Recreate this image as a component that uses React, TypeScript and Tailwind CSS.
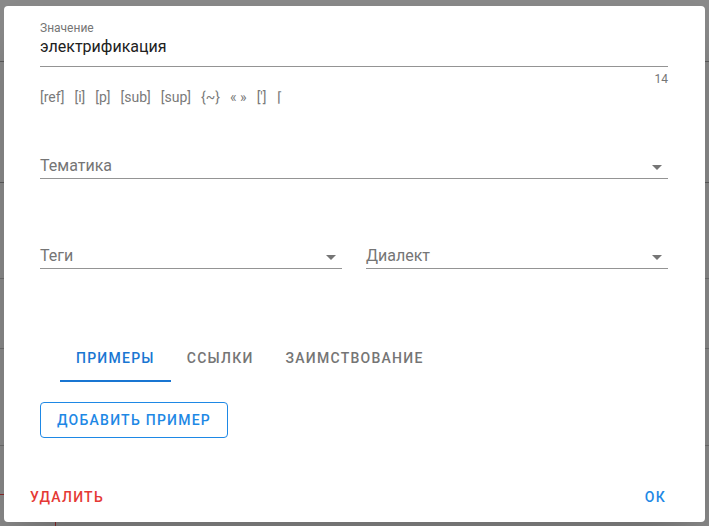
import React from 'react';

const font = { fontFamily: 'Roboto, "Noto Sans", sans-serif' };

function Arrow() {
  return (
    <svg className="w-6 h-6 shrink-0 text-[#757575] -mr-[1px]" viewBox="0 0 24 24" fill="currentColor">
      <path d="M7 10l5 5 5-5z" />
    </svg>
  );
}

function SelectField({ label }: { label: string }) {
  return (
    <div className="flex items-center justify-between border-b border-[#949494] h-[23px] flex-1">
      <span className="text-[16px] leading-[19px] text-[#757575] -mt-[4px]">{label}</span>
      <Arrow />
    </div>
  );
}

const formats = ['[ref]', '[i]', '[p]', '[sub]', '[sup]', '{~}', '« »', "[']", '⌈'];

export default function App() {
  return (
    <div className="w-[709px] h-[526px] bg-[#8a8a8a] relative overflow-hidden" style={font}>
      {/* page behind the overlay */}
      <div className="absolute inset-0 pointer-events-none">
        <div className="absolute left-0 right-0 top-[61px] h-px bg-[#5c5c5c]" />
        <div className="absolute left-0 right-0 top-[182px] h-px bg-[#5c5c5c]" />
        <div className="absolute left-0 right-0 top-[278px] h-px bg-[#6e6e6e]" />
        <div className="absolute left-0 right-0 top-[348px] h-px bg-[#6e6e6e]" />
        <div className="absolute left-0 right-0 top-[445px] h-px bg-[#6e6e6e]" />
        <div className="absolute left-0 w-[6px] top-[494px] h-px bg-[#8b2a2a]" />
        <div className="absolute left-[55px] w-px top-[515px] bottom-0 bg-[#8b2a2a]" />
      </div>

      <div className="relative ml-[4px] mt-[6px] w-[701px] h-[516px] bg-white rounded-[4px] shadow-2xl flex flex-col">
        <div className="pl-[36px] pr-[37px] pt-[15px] flex flex-col">
          <div className="text-[12px] leading-[14px] text-[#757575]">Значение</div>
          <div className="mt-[2px] pb-[10px] border-b border-[#949494] text-[16px] leading-[19px] text-[#212121]">
            электрификация
          </div>
          <div className="mt-[5px] text-right text-[12px] leading-[14px] text-[#757575]">14</div>
          <div className="mt-[3px] flex gap-[10px] text-[14px] leading-[17px] text-[#7a7a7a]">
            {formats.map((f) => (
              <span key={f}>{f}</span>
            ))}
          </div>

          <div className="mt-[50px] flex">
            <SelectField label="Тематика" />
          </div>

          <div className="mt-[67px] flex gap-[24px]">
            <SelectField label="Теги" />
            <SelectField label="Диалект" />
          </div>

          <div className="mt-[65px] ml-[20px] flex h-[48px] text-[14px] font-medium uppercase tracking-[1.25px]">
            <div className="relative px-[16px] flex items-center text-[#1976d2]">
              Примеры
              <div className="absolute left-0 right-0 bottom-0 h-[2px] bg-[#1976d2]" />
            </div>
            <div className="px-[16px] flex items-center text-[#757575]">Ссылки</div>
            <div className="px-[16px] flex items-center text-[#757575]">Заимствование</div>
          </div>

          <div className="mt-[20px] flex">
            <button className="h-[36px] px-[16px] border border-[#1e88e5] rounded-[4px] text-[14px] font-medium uppercase tracking-[1.25px] text-[#1e88e5]">
              Добавить пример
            </button>
          </div>
        </div>

        <div className="mt-auto pl-[26px] pr-[39px] pb-[17px] flex justify-between text-[14px] leading-[16px] font-medium uppercase tracking-[1.25px]">
          <span className="text-[#e53935]">Удалить</span>
          <span className="text-[#1e88e5]">ОК</span>
        </div>
      </div>
    </div>
  );
}
